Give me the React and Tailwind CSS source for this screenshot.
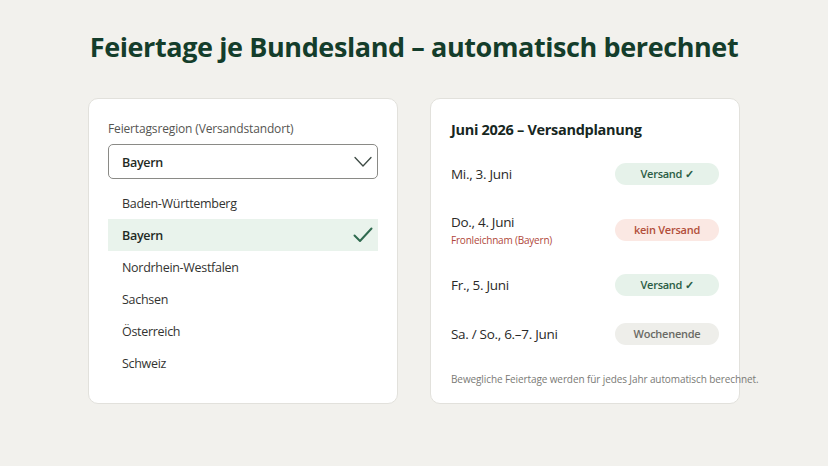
import React from "react";

const regions = [
  "Baden-Württemberg",
  "Bayern",
  "Nordrhein-Westfalen",
  "Sachsen",
  "Österreich",
  "Schweiz",
];

function Badge({ kind, children }) {
  const cls =
    kind === "ok"
      ? "bg-[#e6f2ea] text-[#2b5d45]"
      : kind === "no"
      ? "bg-[#fbe8e3] text-[#b24e3a]"
      : "bg-[#eeeeea] text-[#6a6a65]";
  return (
    <div
      className={`w-[104px] h-[22px] rounded-full flex items-center justify-center text-[11px] tracking-[-0.25px] font-semibold ${cls}`}
    >
      {children}
    </div>
  );
}

export default function App() {
  return (
    <div
      className="w-[828px] h-[466px] bg-[#f2f1ed] overflow-hidden flex flex-col items-center pt-[29px]"
      style={{ fontFamily: '"Open Sans", "Noto Sans", sans-serif' }}
    >
      <h1 className="text-[27px] leading-[36px] font-bold text-[#143d2b] tracking-[-0.4px]">
        Feiertage je Bundesland – automatisch berechnet
      </h1>
      <div className="mt-[33px] flex gap-[32px]">
        {/* Left card */}
        <div className="w-[310px] h-[306px] bg-white border border-[#e2e1dc] rounded-[10px] px-[19px] pt-[21px]">
          <div className="text-[12px] leading-[17px] tracking-[-0.15px] text-[#555552]">
            Feiertagsregion (Versandstandort)
          </div>
          <div className="mt-[7px] h-[35px] border border-[#8a8a86] rounded-[5px] flex items-center justify-between pl-[13px] pr-[5px]">
            <span className="pt-[3px] text-[12.5px] tracking-[-0.3px] font-semibold text-[#1f2a24]">Bayern</span>
            <svg width="18" height="12" viewBox="0 0 18 12" fill="none">
              <path d="M1 1.5 L9 10 L17 1.5" stroke="#3d4a44" strokeWidth="1.3" strokeLinecap="round" strokeLinejoin="round" />
            </svg>
          </div>
          <div className="mt-[8px] flex flex-col">
            {regions.map((r) => {
              const sel = r === "Bayern";
              return (
                <div
                  key={r}
                  className={`h-[32px] flex items-center justify-between pl-[14px] pr-[5px] ${
                    sel ? "bg-[#e9f3ec]" : ""
                  }`}
                >
                  <span
                    className={`pt-[3px] text-[12.5px] tracking-[-0.3px] ${
                      sel ? "font-semibold text-[#1f2a24]" : "text-[#333331]"
                    }`}
                  >
                    {r}
                  </span>
                  {sel && (
                    <svg width="20" height="16" viewBox="0 0 20 16" fill="none">
                      <path d="M1.5 8.5 L7 14 L18.5 1.5" stroke="#2f6a4f" strokeWidth="2" strokeLinecap="round" strokeLinejoin="round" />
                    </svg>
                  )}
                </div>
              );
            })}
          </div>
        </div>

        {/* Right card */}
        <div className="w-[310px] h-[306px] bg-white border border-[#e2e1dc] rounded-[10px] px-[20px] pt-[20px]">
          <div className="text-[14.5px] leading-[22px] tracking-[-0.3px] font-bold text-[#17271f]">
            Juni 2026 – Versandplanung
          </div>
          <div className="mt-[22px] flex flex-col gap-[27px]">
            <div className="flex items-center justify-between">
              <span className="text-[13.5px] tracking-[-0.3px] text-[#2a2a28]">Mi., 3. Juni</span>
              <Badge kind="ok">Versand ✓</Badge>
            </div>
            <div className="flex items-center justify-between">
              <div className="flex flex-col">
                <span className="text-[13.5px] leading-[20px] tracking-[-0.3px] text-[#2a2a28]">Do., 4. Juni</span>
                <span className="text-[10px] leading-[15px] tracking-[-0.2px] text-[#b0473a] mt-[1px]">
                  Fronleichnam (Bayern)
                </span>
              </div>
              <Badge kind="no">kein Versand</Badge>
            </div>
            <div className="flex items-center justify-between -mt-[1px]">
              <span className="text-[13.5px] tracking-[-0.3px] text-[#2a2a28]">Fr., 5. Juni</span>
              <Badge kind="ok">Versand ✓</Badge>
            </div>
            <div className="flex items-center justify-between">
              <span className="text-[13.5px] tracking-[-0.3px] text-[#2a2a28]">Sa. / So., 6.–7. Juni</span>
              <Badge kind="we">Wochenende</Badge>
            </div>
          </div>
          <div className="mt-[26px] text-[10px] leading-[16px] tracking-[-0.1px] text-[#7a7a76] whitespace-nowrap">
            Bewegliche Feiertage werden für jedes Jahr automatisch berechnet.
          </div>
        </div>
      </div>
    </div>
  );
}
